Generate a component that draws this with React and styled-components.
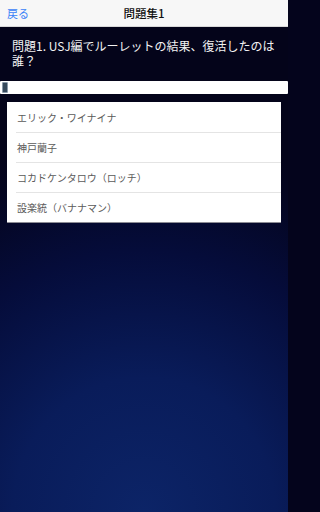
import React from 'react';
import styled, { createGlobalStyle } from 'styled-components';

const GlobalStyle = createGlobalStyle`
  html, body {
    margin: 0;
    padding: 0;
    height: 100%;
  }
  body {
    font-family: "Noto Sans CJK JP", "Noto Sans", sans-serif;
    background: #04041c;
  }
  #root {
    min-height: 100%;
  }
`;

const Screen = styled.div`
  width: 288px;
  min-height: 100vh;
  display: flex;
  flex-direction: column;
  overflow: hidden;
  background: radial-gradient(ellipse 130% 75% at 50% 100%, #0c2467 0%, #091c5a 35%, #050c3a 68%, #04051f 92%, #04041a 100%);
`;

const NavBar = styled.header`
  height: 27px;
  flex-shrink: 0;
  background: #f7f7f7;
  border-bottom: 1px solid #d8d8d8;
  box-sizing: border-box;
  display: grid;
  grid-template-columns: 1fr auto 1fr;
  align-items: center;
  padding: 0 7px;
`;

const BackButton = styled.button`
  justify-self: start;
  background: none;
  border: none;
  padding: 0;
  font-family: inherit;
  font-size: 11px;
  color: #3a82f7;
`;

const Title = styled.h1`
  margin: 0;
  font-size: 11.5px;
  font-weight: 500;
  color: #111;
`;

const Question = styled.p`
  margin: 0;
  padding: 11px 12px 0;
  font-size: 12px;
  line-height: 15px;
  color: #f2f2f2;
`;

const Progress = styled.div`
  margin-top: 13px;
  height: 13px;
  background: #fff;
  border-radius: 1px;
  padding: 1px 2px;
  box-sizing: border-box;
  display: flex;
`;

const ProgressFill = styled.div`
  width: 6px;
  background: #36495b;
  border: 1px solid #8a99a8;
  border-radius: 1px;
  box-sizing: border-box;
`;

const Choices = styled.ul`
  list-style: none;
  margin: 8px 7px 0;
  padding: 0;
  background: #fff;
  border-bottom: 1px solid #8c8c94;
`;

const Choice = styled.li`
  height: 30px;
  display: flex;
  align-items: center;
  padding-left: 10px;
  font-size: 10px;
  color: #5a5a5a;

  & + & {
    position: relative;
  }

  & + &::before {
    content: '';
    position: absolute;
    top: 0;
    left: 9px;
    right: 0;
    height: 1px;
    background: #e4e4e4;
  }
`;

const choices = [
  'エリック・ワイナイナ',
  '神戸蘭子',
  'コカドケンタロウ（ロッチ）',
  '設楽統（バナナマン）',
];

export default function App() {
  return (
    <>
      <GlobalStyle />
      <Screen>
        <NavBar>
          <BackButton>戻る</BackButton>
          <Title>問題集1</Title>
          <span />
        </NavBar>
        <Question>問題1. USJ編でルーレットの結果、復活したのは誰？</Question>
        <Progress>
          <ProgressFill />
        </Progress>
        <Choices>
          {choices.map((c) => (
            <Choice key={c}>{c}</Choice>
          ))}
        </Choices>
      </Screen>
    </>
  );
}
